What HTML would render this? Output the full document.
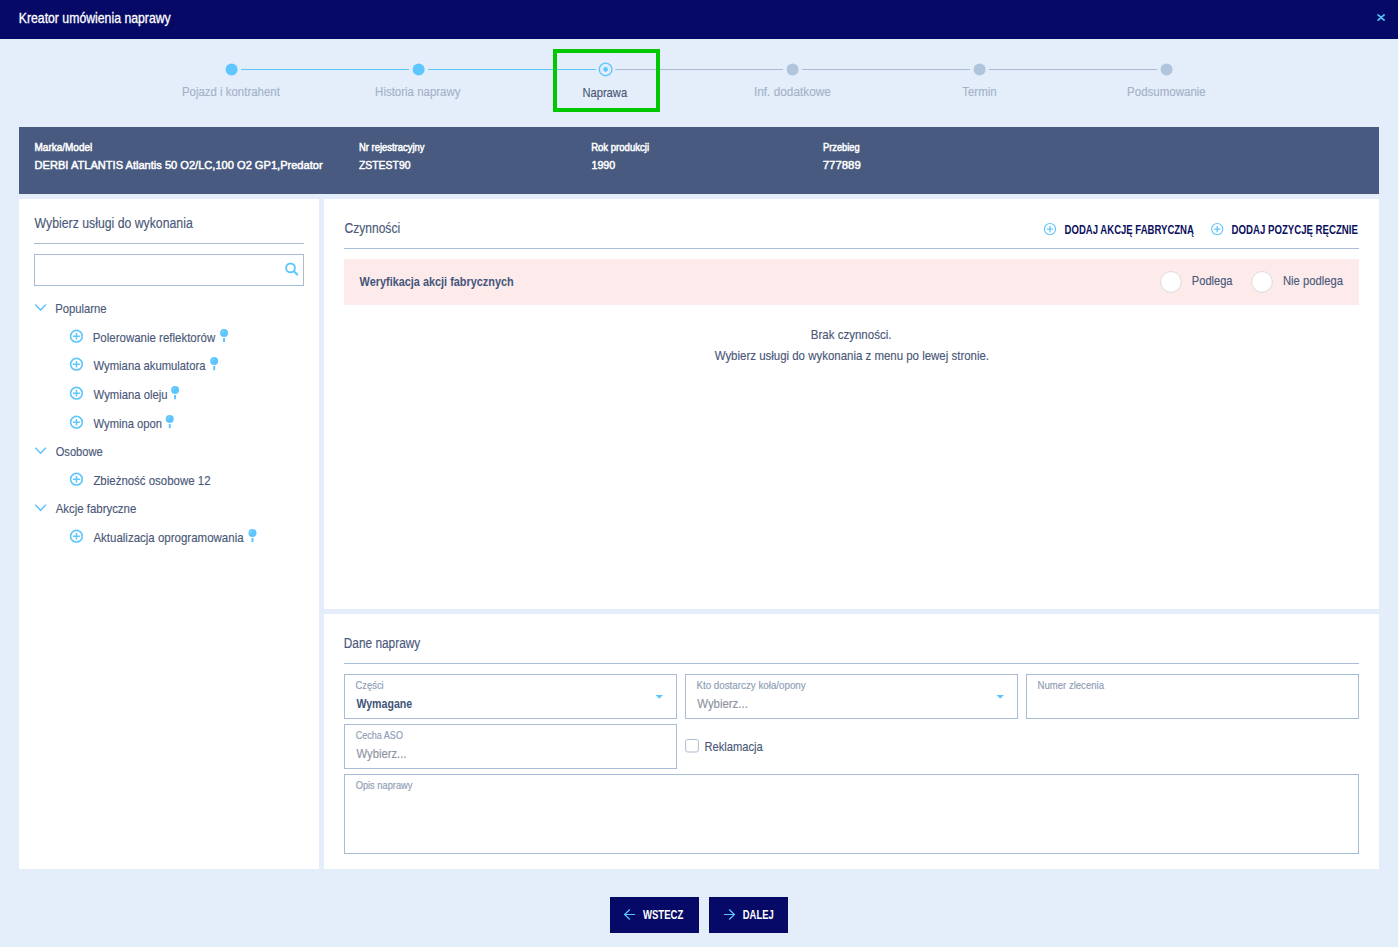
<!DOCTYPE html>
<html><head><meta charset="utf-8"><title>Kreator umówienia naprawy</title>
<style>html,body{margin:0;padding:0;width:1398px;height:947px;overflow:hidden;background:#e4eefa;}
svg{display:block;font-family:"Liberation Sans",sans-serif;}</style></head>
<body><svg width="1398" height="947" viewBox="0 0 1398 947">
<rect x="0" y="0" width="1398" height="947" fill="#e4eefa"/>
<rect x="0" y="0" width="1398" height="39" fill="#060a66"/>
<path d="M1378.1 14.8 L1384.1 20.2 M1384.1 14.8 L1378.1 20.2" stroke="#52c4f8" stroke-width="1.7" stroke-linecap="round"/>
<rect x="241.1" y="69" width="168.0" height="1" fill="#5ec6fe"/>
<rect x="428.1" y="69" width="168.0" height="1" fill="#5ec6fe"/>
<rect x="615.1" y="69" width="168.0" height="1" fill="#a9bcd6"/>
<rect x="802.1" y="69" width="168.0" height="1" fill="#a9bcd6"/>
<rect x="989.1" y="69" width="168.0" height="1" fill="#a9bcd6"/>
<circle cx="231.6" cy="69.4" r="6" fill="#5ec6fe"/>
<circle cx="418.6" cy="69.4" r="6" fill="#5ec6fe"/>
<circle cx="605.6" cy="69.4" r="6.3" fill="none" stroke="#5ec6fe" stroke-width="1.4"/>
<circle cx="605.6" cy="69.4" r="2.3" fill="#5ec6fe"/>
<circle cx="792.6" cy="69.4" r="6" fill="#b0c4dc"/>
<circle cx="979.6" cy="69.4" r="6" fill="#b0c4dc"/>
<circle cx="1166.6" cy="69.4" r="6" fill="#b0c4dc"/>
<rect x="555" y="51" width="103" height="59" fill="none" stroke="#00c800" stroke-width="4"/>
<rect x="19" y="127" width="1360" height="67" fill="#485a80"/>
<rect x="19" y="199" width="300" height="670" fill="#ffffff"/>
<rect x="324" y="199" width="1055" height="410" fill="#ffffff"/>
<rect x="324" y="614" width="1055" height="255" fill="#ffffff"/>
<rect x="34" y="243" width="270" height="1" fill="#a9bcd6"/>
<rect x="344" y="248" width="1015" height="1" fill="#a9bcd6"/>
<rect x="344" y="663" width="1015" height="1" fill="#a9bcd6"/>
<rect x="34.5" y="254.5" width="269" height="31" fill="#fff" stroke="#a9bcd6" stroke-width="1"/>
<circle cx="290.5" cy="267.9" r="4.4" fill="none" stroke="#5ec6fe" stroke-width="1.9"/>
<path d="M293.9 271.2 L297.2 274.4" stroke="#5ec6fe" stroke-width="2.1" stroke-linecap="round"/>
<path d="M35.3 304.60 L40.6 310.10 L45.9 304.60" fill="none" stroke="#5ec6fe" stroke-width="1.5"/>
<path d="M35.3 447.70 L40.6 453.20 L45.9 447.70" fill="none" stroke="#5ec6fe" stroke-width="1.5"/>
<path d="M35.3 504.80 L40.6 510.30 L45.9 504.80" fill="none" stroke="#5ec6fe" stroke-width="1.5"/>
<circle cx="76.45" cy="336.20" r="5.85" fill="none" stroke="#5ec6fe" stroke-width="1.6"/>
<path d="M73.0 336.20 H79.9 M76.45 332.90 V339.50" stroke="#5ec6fe" stroke-width="1.5"/>
<circle cx="76.45" cy="364.20" r="5.85" fill="none" stroke="#5ec6fe" stroke-width="1.6"/>
<path d="M73.0 364.20 H79.9 M76.45 360.90 V367.50" stroke="#5ec6fe" stroke-width="1.5"/>
<circle cx="76.45" cy="393.20" r="5.85" fill="none" stroke="#5ec6fe" stroke-width="1.6"/>
<path d="M73.0 393.20 H79.9 M76.45 389.90 V396.50" stroke="#5ec6fe" stroke-width="1.5"/>
<circle cx="76.45" cy="422.20" r="5.85" fill="none" stroke="#5ec6fe" stroke-width="1.6"/>
<path d="M73.0 422.20 H79.9 M76.45 418.90 V425.50" stroke="#5ec6fe" stroke-width="1.5"/>
<circle cx="76.45" cy="479.20" r="5.85" fill="none" stroke="#5ec6fe" stroke-width="1.6"/>
<path d="M73.0 479.20 H79.9 M76.45 475.90 V482.50" stroke="#5ec6fe" stroke-width="1.5"/>
<circle cx="76.45" cy="536.20" r="5.85" fill="none" stroke="#5ec6fe" stroke-width="1.6"/>
<path d="M73.0 536.20 H79.9 M76.45 532.90 V539.50" stroke="#5ec6fe" stroke-width="1.5"/>
<circle cx="224.05" cy="333.10" r="4.0" fill="#5ec6fe"/>
<path d="M221.95 332.90 A2.3 2.3 0 0 1 223.85 330.90" fill="none" stroke="#a6dcfb" stroke-width="0.8"/>
<rect x="223.05" y="338.00" width="2" height="4.2" fill="#5ec6fe"/>
<circle cx="214.20" cy="361.10" r="4.0" fill="#5ec6fe"/>
<path d="M212.10 360.90 A2.3 2.3 0 0 1 214.00 358.90" fill="none" stroke="#a6dcfb" stroke-width="0.8"/>
<rect x="213.20" y="366.00" width="2" height="4.2" fill="#5ec6fe"/>
<circle cx="175.10" cy="390.10" r="4.0" fill="#5ec6fe"/>
<path d="M173.00 389.90 A2.3 2.3 0 0 1 174.90 387.90" fill="none" stroke="#a6dcfb" stroke-width="0.8"/>
<rect x="174.10" y="395.00" width="2" height="4.2" fill="#5ec6fe"/>
<circle cx="169.75" cy="419.10" r="4.0" fill="#5ec6fe"/>
<path d="M167.65 418.90 A2.3 2.3 0 0 1 169.55 416.90" fill="none" stroke="#a6dcfb" stroke-width="0.8"/>
<rect x="168.75" y="424.00" width="2" height="4.2" fill="#5ec6fe"/>
<circle cx="252.50" cy="533.10" r="4.0" fill="#5ec6fe"/>
<path d="M250.40 532.90 A2.3 2.3 0 0 1 252.30 530.90" fill="none" stroke="#a6dcfb" stroke-width="0.8"/>
<rect x="251.50" y="538.00" width="2" height="4.2" fill="#5ec6fe"/>
<circle cx="1050.0" cy="229.1" r="5.6" fill="none" stroke="#5ec6fe" stroke-width="1.15"/>
<path d="M1046.9 229.1 H1053.1 M1050.00 226.0 V232.2" stroke="#5ec6fe" stroke-width="1.3"/>
<circle cx="1217.2" cy="229.1" r="5.6" fill="none" stroke="#5ec6fe" stroke-width="1.15"/>
<path d="M1214.2 229.1 H1220.3 M1217.25 226.0 V232.2" stroke="#5ec6fe" stroke-width="1.3"/>
<rect x="344" y="259" width="1015" height="46" fill="#fdebeb"/>
<circle cx="1170.9" cy="281.9" r="10.35" fill="#fff" stroke="#dcdcdc" stroke-width="1"/>
<circle cx="1262.0" cy="281.9" r="10.35" fill="#fff" stroke="#dcdcdc" stroke-width="1"/>
<rect x="344.5" y="674.5" width="332" height="44" fill="#fff" stroke="#a9bcd6" stroke-width="1"/>
<rect x="685.5" y="674.5" width="332" height="44" fill="#fff" stroke="#a9bcd6" stroke-width="1"/>
<rect x="1026.5" y="674.5" width="332" height="44" fill="#fff" stroke="#a9bcd6" stroke-width="1"/>
<rect x="344.5" y="724.5" width="332" height="44" fill="#fff" stroke="#a9bcd6" stroke-width="1"/>
<rect x="344.5" y="774.5" width="1014" height="79" fill="#fff" stroke="#a9bcd6" stroke-width="1"/>
<path d="M655.6 695 H663.0 L659.3 698.8 Z" fill="#5ec6fe"/>
<path d="M996.5 695 H1003.9 L1000.2 698.8 Z" fill="#5ec6fe"/>
<rect x="685.65" y="739.5" width="12.7" height="12.5" rx="2" fill="#fff" stroke="#a9bcd6" stroke-width="1"/>
<rect x="610" y="897" width="89" height="36" fill="#060a66"/>
<rect x="709" y="897" width="79" height="36" fill="#060a66"/>
<path d="M635 914.5 H624.8 M629.8 909.5 L624.6 914.5 L629.8 919.5" fill="none" stroke="#5ec6fe" stroke-width="1.2"/>
<path d="M724 914.5 H734.2 M729.2 909.5 L734.4 914.5 L729.2 919.5" fill="none" stroke="#5ec6fe" stroke-width="1.2"/>
<text x="18.72" y="22.85" font-size="14.16" font-weight="normal" fill="#ffffff" stroke="#ffffff" stroke-width="0.3" textLength="152.03" lengthAdjust="spacingAndGlyphs">Kreator umówienia naprawy</text>
<text x="181.91" y="95.92" font-size="13.22" font-weight="normal" fill="#a3b2c8" stroke="#a3b2c8" stroke-width="0.15" textLength="97.93" lengthAdjust="spacingAndGlyphs">Pojazd i kontrahent</text>
<text x="375.11" y="95.92" font-size="13.22" font-weight="normal" fill="#a3b2c8" stroke="#a3b2c8" stroke-width="0.15" textLength="85.38" lengthAdjust="spacingAndGlyphs">Historia naprawy</text>
<text x="582.41" y="96.92" font-size="12.93" font-weight="normal" fill="#4b5675" stroke="#4b5675" stroke-width="0.15" textLength="44.71" lengthAdjust="spacingAndGlyphs">Naprawa</text>
<text x="753.98" y="95.92" font-size="13.22" font-weight="normal" fill="#a3b2c8" stroke="#a3b2c8" stroke-width="0.15" textLength="76.86" lengthAdjust="spacingAndGlyphs">Inf. dodatkowe</text>
<text x="962.28" y="95.92" font-size="13.22" font-weight="normal" fill="#a3b2c8" stroke="#a3b2c8" stroke-width="0.15" textLength="34.35" lengthAdjust="spacingAndGlyphs">Termin</text>
<text x="1127.11" y="95.92" font-size="13.22" font-weight="normal" fill="#a3b2c8" stroke="#a3b2c8" stroke-width="0.15" textLength="78.63" lengthAdjust="spacingAndGlyphs">Podsumowanie</text>
<text x="34.55" y="150.75" font-size="10.68" font-weight="normal" fill="#ffffff" stroke="#ffffff" stroke-width="0.5" textLength="57.65" lengthAdjust="spacingAndGlyphs">Marka/Model</text>
<text x="34.55" y="168.75" font-size="11.7" font-weight="normal" fill="#ffffff" stroke="#ffffff" stroke-width="0.5" textLength="288.10" lengthAdjust="spacingAndGlyphs">DERBI ATLANTIS Atlantis 50 O2/LC,100 O2 GP1,Predator</text>
<text x="358.95" y="150.75" font-size="10.68" font-weight="normal" fill="#ffffff" stroke="#ffffff" stroke-width="0.5" textLength="65.51" lengthAdjust="spacingAndGlyphs">Nr rejestracyjny</text>
<text x="358.95" y="168.75" font-size="11.7" font-weight="normal" fill="#ffffff" stroke="#ffffff" stroke-width="0.5" textLength="51.55" lengthAdjust="spacingAndGlyphs">ZSTEST90</text>
<text x="591.15" y="150.75" font-size="10.68" font-weight="normal" fill="#ffffff" stroke="#ffffff" stroke-width="0.5" textLength="57.93" lengthAdjust="spacingAndGlyphs">Rok produkcji</text>
<text x="591.45" y="168.75" font-size="11.7" font-weight="normal" fill="#ffffff" stroke="#ffffff" stroke-width="0.5" textLength="23.84" lengthAdjust="spacingAndGlyphs">1990</text>
<text x="822.95" y="150.75" font-size="10.68" font-weight="normal" fill="#ffffff" stroke="#ffffff" stroke-width="0.5" textLength="36.74" lengthAdjust="spacingAndGlyphs">Przebieg</text>
<text x="822.75" y="168.75" font-size="11.7" font-weight="normal" fill="#ffffff" stroke="#ffffff" stroke-width="0.5" textLength="37.99" lengthAdjust="spacingAndGlyphs">777889</text>
<text x="34.58" y="227.93" font-size="14.38" font-weight="normal" fill="#4a5879" stroke="#4a5879" stroke-width="0.15" textLength="158.15" lengthAdjust="spacingAndGlyphs">Wybierz usługi do wykonania</text>
<text x="55.20" y="312.93" font-size="12.93" font-weight="normal" fill="#4a5879" stroke="#4a5879" stroke-width="0.15" textLength="51.38" lengthAdjust="spacingAndGlyphs">Popularne</text>
<text x="92.69" y="341.93" font-size="12.93" font-weight="normal" fill="#4a5879" stroke="#4a5879" stroke-width="0.15" textLength="122.54" lengthAdjust="spacingAndGlyphs">Polerowanie reflektorów</text>
<text x="93.58" y="369.93" font-size="12.93" font-weight="normal" fill="#4a5879" stroke="#4a5879" stroke-width="0.15" textLength="111.94" lengthAdjust="spacingAndGlyphs">Wymiana akumulatora</text>
<text x="93.58" y="398.93" font-size="12.93" font-weight="normal" fill="#4a5879" stroke="#4a5879" stroke-width="0.15" textLength="73.91" lengthAdjust="spacingAndGlyphs">Wymiana oleju</text>
<text x="93.58" y="427.93" font-size="12.93" font-weight="normal" fill="#4a5879" stroke="#4a5879" stroke-width="0.15" textLength="68.41" lengthAdjust="spacingAndGlyphs">Wymina opon</text>
<text x="55.68" y="455.93" font-size="12.93" font-weight="normal" fill="#4a5879" stroke="#4a5879" stroke-width="0.15" textLength="47.01" lengthAdjust="spacingAndGlyphs">Osobowe</text>
<text x="93.38" y="484.93" font-size="12.93" font-weight="normal" fill="#4a5879" stroke="#4a5879" stroke-width="0.15" textLength="117.12" lengthAdjust="spacingAndGlyphs">Zbieżność osobowe 12</text>
<text x="55.68" y="512.92" font-size="12.93" font-weight="normal" fill="#4a5879" stroke="#4a5879" stroke-width="0.15" textLength="80.61" lengthAdjust="spacingAndGlyphs">Akcje fabryczne</text>
<text x="93.38" y="541.92" font-size="12.93" font-weight="normal" fill="#4a5879" stroke="#4a5879" stroke-width="0.15" textLength="150.23" lengthAdjust="spacingAndGlyphs">Aktualizacja oprogramowania</text>
<text x="344.57" y="232.93" font-size="14.38" font-weight="normal" fill="#4a5879" stroke="#4a5879" stroke-width="0.15" textLength="55.51" lengthAdjust="spacingAndGlyphs">Czynności</text>
<text x="1064.60" y="234.00" font-size="12.5" font-weight="bold" fill="#0b0f5e" textLength="129.32" lengthAdjust="spacingAndGlyphs">DODAJ AKCJĘ FABRYCZNĄ</text>
<text x="1231.60" y="234.00" font-size="12.5" font-weight="bold" fill="#0b0f5e" textLength="126.26" lengthAdjust="spacingAndGlyphs">DODAJ POZYCJĘ RĘCZNIE</text>
<text x="359.60" y="286.00" font-size="13.23" font-weight="bold" fill="#43557a" textLength="154.06" lengthAdjust="spacingAndGlyphs">Weryfikacja akcji fabrycznych</text>
<text x="1191.82" y="284.93" font-size="12.93" font-weight="normal" fill="#4a5879" stroke="#4a5879" stroke-width="0.15" textLength="40.71" lengthAdjust="spacingAndGlyphs">Podlega</text>
<text x="1282.90" y="284.93" font-size="12.93" font-weight="normal" fill="#4a5879" stroke="#4a5879" stroke-width="0.15" textLength="60.01" lengthAdjust="spacingAndGlyphs">Nie podlega</text>
<text x="810.78" y="338.93" font-size="12.93" font-weight="normal" fill="#4a5879" stroke="#4a5879" stroke-width="0.15" textLength="80.67" lengthAdjust="spacingAndGlyphs">Brak czynności.</text>
<text x="714.68" y="359.93" font-size="12.93" font-weight="normal" fill="#4a5879" stroke="#4a5879" stroke-width="0.15" textLength="274.37" lengthAdjust="spacingAndGlyphs">Wybierz usługi do wykonania z menu po lewej stronie.</text>
<text x="343.75" y="647.92" font-size="14.38" font-weight="normal" fill="#4a5879" stroke="#4a5879" stroke-width="0.15" textLength="76.50" lengthAdjust="spacingAndGlyphs">Dane naprawy</text>
<text x="355.57" y="688.92" font-size="10.46" font-weight="normal" fill="#8d9cb5" stroke="#8d9cb5" stroke-width="0.15" textLength="28.14" lengthAdjust="spacingAndGlyphs">Części</text>
<text x="356.40" y="708.00" font-size="12.21" font-weight="bold" fill="#43557a" textLength="55.81" lengthAdjust="spacingAndGlyphs">Wymagane</text>
<text x="696.48" y="688.92" font-size="10.46" font-weight="normal" fill="#8d9cb5" stroke="#8d9cb5" stroke-width="0.15" textLength="109.23" lengthAdjust="spacingAndGlyphs">Kto dostarczy koła/opony</text>
<text x="697.28" y="707.92" font-size="13.22" font-weight="normal" fill="#8e949f" stroke="#8e949f" stroke-width="0.15" textLength="50.53" lengthAdjust="spacingAndGlyphs">Wybierz...</text>
<text x="1037.58" y="688.92" font-size="10.46" font-weight="normal" fill="#8d9cb5" stroke="#8d9cb5" stroke-width="0.15" textLength="66.38" lengthAdjust="spacingAndGlyphs">Numer zlecenia</text>
<text x="355.68" y="738.92" font-size="10.46" font-weight="normal" fill="#8d9cb5" stroke="#8d9cb5" stroke-width="0.15" textLength="47.26" lengthAdjust="spacingAndGlyphs">Cecha ASO</text>
<text x="356.57" y="757.92" font-size="13.22" font-weight="normal" fill="#8e949f" stroke="#8e949f" stroke-width="0.15" textLength="49.92" lengthAdjust="spacingAndGlyphs">Wybierz...</text>
<text x="704.41" y="750.92" font-size="12.93" font-weight="normal" fill="#4a5879" stroke="#4a5879" stroke-width="0.15" textLength="58.41" lengthAdjust="spacingAndGlyphs">Reklamacja</text>
<text x="355.68" y="788.92" font-size="10.46" font-weight="normal" fill="#8d9cb5" stroke="#8d9cb5" stroke-width="0.15" textLength="56.76" lengthAdjust="spacingAndGlyphs">Opis naprawy</text>
<text x="642.90" y="919.00" font-size="12.21" font-weight="bold" fill="#ffffff" textLength="40.37" lengthAdjust="spacingAndGlyphs">WSTECZ</text>
<text x="742.80" y="919.00" font-size="12.21" font-weight="bold" fill="#ffffff" textLength="30.91" lengthAdjust="spacingAndGlyphs">DALEJ</text>
</svg></body></html>
